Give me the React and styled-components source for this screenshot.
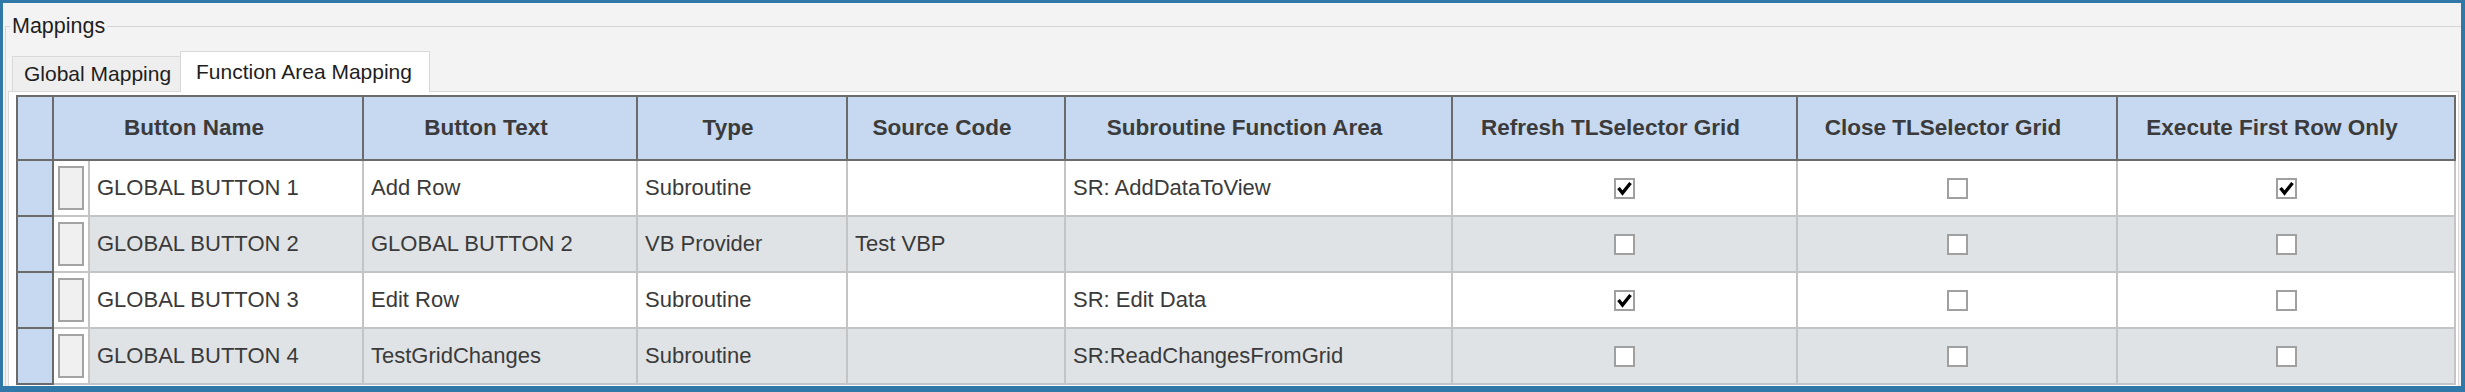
import React from "react";
import styled, { createGlobalStyle } from "styled-components";

const GlobalStyle = createGlobalStyle`
  html, body {
    margin: 0;
    padding: 0;
    background: #f3f3f3;
  }
  body {
    font-family: "Liberation Sans", Arial, sans-serif;
  }
  * {
    box-sizing: border-box;
  }
`;

const columns = [
  { key: "name", title: "Button Name", width: 310 },
  { key: "text", title: "Button Text", width: 274 },
  { key: "type", title: "Type", width: 210 },
  { key: "source", title: "Source Code", width: 218 },
  { key: "area", title: "Subroutine Function Area", width: 387 },
  { key: "refresh", title: "Refresh TLSelector Grid", width: 345, check: true },
  { key: "close", title: "Close TLSelector Grid", width: 320, check: true },
  { key: "first", title: "Execute First Row Only", width: 338, check: true },
];

const rows = [
  {
    name: "GLOBAL BUTTON 1",
    text: "Add Row",
    type: "Subroutine",
    source: "",
    area: "SR: AddDataToView",
    refresh: true,
    close: false,
    first: true,
  },
  {
    name: "GLOBAL BUTTON 2",
    text: "GLOBAL BUTTON 2",
    type: "VB Provider",
    source: "Test VBP",
    area: "",
    refresh: false,
    close: false,
    first: false,
  },
  {
    name: "GLOBAL BUTTON 3",
    text: "Edit Row",
    type: "Subroutine",
    source: "",
    area: "SR: Edit Data",
    refresh: true,
    close: false,
    first: false,
  },
  {
    name: "GLOBAL BUTTON 4",
    text: "TestGridChanges",
    type: "Subroutine",
    source: "",
    area: "SR:ReadChangesFromGrid",
    refresh: false,
    close: false,
    first: false,
  },
];

function CheckBox({ checked }) {
  return (
    <Box>
      {checked && (
        <svg width="17" height="17" viewBox="0 0 17 17">
          <polyline
            points="2.5,8 6.5,13 14.5,3"
            fill="none"
            stroke="#000"
            strokeWidth="3.4"
            strokeLinejoin="miter"
          />
        </svg>
      )}
    </Box>
  );
}

function App() {
  const template = "36px " + columns.map((c) => c.width + "px").join(" ");
  return (
    <>
      <GlobalStyle />
      <Window>
        <GroupBox>
          <Legend>Mappings</Legend>
          <TabStrip>
            <Tab>Global Mapping</Tab>
            <Tab $active>Function Area Mapping</Tab>
          </TabStrip>
          <TabPanel>
            <Grid $template={template}>
              <HeaderCell $corner />
              {columns.map((c) => (
                <HeaderCell key={c.key}>{c.title}</HeaderCell>
              ))}
              {rows.map((row, i) => (
                <React.Fragment key={row.name}>
                  <RowHeader />
                  {columns.map((c) => {
                    if (c.check) {
                      return (
                        <Cell key={c.key} $alt={i % 2 === 1} $center>
                          <CheckBox checked={row[c.key]} />
                        </Cell>
                      );
                    }
                    if (c.key === "name") {
                      return (
                        <NameCell key={c.key} $alt={i % 2 === 1}>
                          <ButtonSlot>
                            <GridButton />
                          </ButtonSlot>
                          <CellText>{row.name}</CellText>
                        </NameCell>
                      );
                    }
                    return (
                      <Cell key={c.key} $alt={i % 2 === 1}>
                        <CellText>{row[c.key]}</CellText>
                      </Cell>
                    );
                  })}
                </React.Fragment>
              ))}
            </Grid>
          </TabPanel>
        </GroupBox>
      </Window>
    </>
  );
}

const Window = styled.div`
  width: 2465px;
  height: 392px;
  border-style: solid;
  border-color: #2f78a8;
  border-width: 3px 4px 6px 3px;
  background: #f3f3f3;
  overflow: hidden;
  padding: 10px 0 0 2px;
`;

const GroupBox = styled.fieldset`
  margin: 0;
  padding: 12px 2px 0 2px;
  min-width: 0;
  border: 1px solid #d6d6d6;
  border-right: none;
  border-bottom: none;
  height: 420px;
`;

const Legend = styled.legend`
  margin-left: 2px;
  padding: 0 2px;
  font-size: 21.5px;
  line-height: 26px;
  color: #1e1e1e;
`;

const TabStrip = styled.div`
  display: flex;
  align-items: flex-end;
  height: 40px;
  margin-left: 4px;
`;

const Tab = styled.div`
  position: relative;
  display: flex;
  align-items: center;
  font-size: 21px;
  color: #1e1e1e;
  border: 1px solid #d9d9d9;
  border-bottom: none;
  height: ${(p) => (p.$active ? "41px" : "35px")};
  width: ${(p) => (p.$active ? "250px" : "169px")};
  padding-left: ${(p) => (p.$active ? "15px" : "11px")};
  background: ${(p) => (p.$active ? "#ffffff" : "#eeeeee")};
  margin-bottom: ${(p) => (p.$active ? "-1px" : "0")};
  margin-left: ${(p) => (p.$active ? "-1px" : "0")};
  z-index: ${(p) => (p.$active ? 1 : 0)};
`;

const TabPanel = styled.div`
  background: #ffffff;
  border: 1px solid #d9d9d9;
  padding: 3px 2px 0 7px;
  height: 400px;
`;

const Grid = styled.div`
  display: grid;
  grid-template-columns: ${(p) => p.$template};
  grid-template-rows: 64px;
  grid-auto-rows: 56px;
  width: fit-content;
  border-left: 2px solid #6b6b6b;
  border-top: 2px solid #6b6b6b;
`;

const HeaderCell = styled.div`
  background: #c6d9f1;
  border-right: 2px solid #6b6b6b;
  border-bottom: 2px solid #6b6b6b;
  display: flex;
  align-items: center;
  justify-content: center;
  padding-right: ${(p) => (p.$corner ? "0" : "28px")};
  font-size: 22.5px;
  font-weight: bold;
  color: #3b3b3b;
  white-space: nowrap;
`;

const RowHeader = styled.div`
  background: #c6d9f1;
  border-right: 2px solid #6b6b6b;
  border-bottom: 2px solid #6b6b6b;
`;

const Cell = styled.div`
  display: flex;
  align-items: center;
  justify-content: ${(p) => (p.$center ? "center" : "flex-start")};
  padding-left: ${(p) => (p.$center ? "0" : "7px")};
  background: ${(p) => (p.$alt ? "#dfe3e6" : "#ffffff")};
  border-right: 2px solid #c4c4c4;
  border-bottom: 2px solid #c4c4c4;
  overflow: hidden;
`;

const NameCell = styled(Cell)`
  padding-left: 0;
`;

const ButtonSlot = styled.div`
  width: 36px;
  height: 100%;
  background: #ffffff;
  border-right: 2px solid #c4c4c4;
  display: flex;
  align-items: center;
  padding-left: 4px;
  margin-right: 7px;
`;

const GridButton = styled.div`
  width: 26px;
  height: 44px;
  background: #f0f0f0;
  border: 2px solid #a3a3a3;
`;

const CellText = styled.span`
  font-size: 22px;
  color: #3a3a3a;
  white-space: nowrap;
`;

const Box = styled.div`
  width: 21px;
  height: 21px;
  border: 2px solid #a0a0a0;
  background: #ffffff;
  display: flex;
  align-items: center;
  justify-content: center;
`;

export default App;
